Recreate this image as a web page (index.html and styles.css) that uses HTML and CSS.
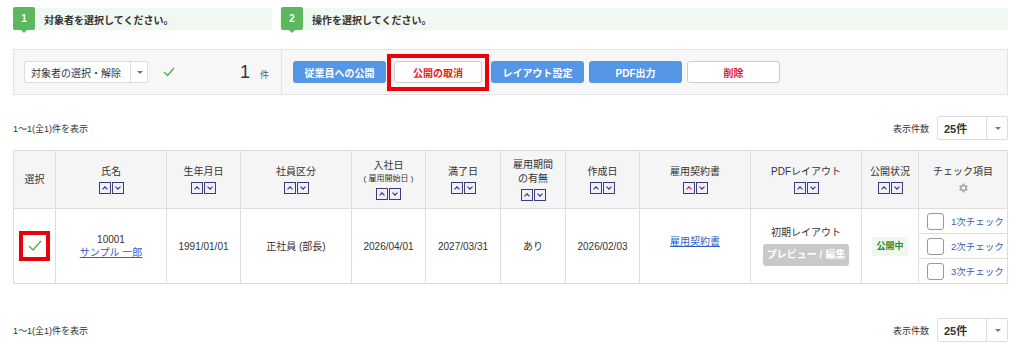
FILE: index.html
```html
<!DOCTYPE html>
<html lang="ja">
<head>
    <meta charset="UTF-8">
    <title>対象者一覧</title>
    <link rel="stylesheet" href="styles.css">
</head>
<body>
    <div class="page">
        <div class="steps">
            <div class="step step-1">
                <span class="step-badge">1</span>
                <span class="step-title">対象者を選択してください。</span>
            </div>
            <div class="step step-2">
                <span class="step-badge">2</span>
                <span class="step-title">操作を選択してください。</span>
            </div>
        </div>

        <div class="toolbar">
            <div class="toolbar-select">
                <div class="select select-target">
                    <span class="select-label">対象者の選択・解除</span>
                    <span class="select-caret"></span>
                </div>
                <svg class="tick" width="14" height="12" viewBox="0 0 14 12">
                    <polyline points="2,6 5.5,9.5 12,2" fill="none" stroke="#4caf50" stroke-width="1.3"/>
                </svg>
                <span class="count">1</span>
                <span class="count-unit">件</span>
            </div>
            <div class="toolbar-actions">
                <button class="btn btn-blue">従業員への公開</button>
                <span class="highlight">
                    <button class="btn btn-white btn-red-text">公開の取消</button>
                </span>
                <button class="btn btn-blue">レイアウト設定</button>
                <button class="btn btn-blue">PDF出力</button>
                <button class="btn btn-white btn-red-text">削除</button>
            </div>
        </div>

        <div class="list-info">
            <span class="result">1～1(全1)件を表示</span>
            <div class="per-page">
                <span class="per-page-label">表示件数</span>
                <div class="select select-per-page">
                    <span class="select-label">25件</span>
                    <span class="select-caret"></span>
                </div>
            </div>
        </div>

        <table class="list">
            <thead>
                <tr>
                    <th class="col-select">選択</th>
                    <th class="col-name">氏名<span class="sort"><i class="up"></i><i class="down"></i></span></th>
                    <th class="col-birth">生年月日<span class="sort"><i class="up"></i><i class="down"></i></span></th>
                    <th class="col-type">社員区分<span class="sort"><i class="up"></i><i class="down"></i></span></th>
                    <th class="col-date">入社日<small>( 雇用開始日 )</small><span class="sort"><i class="up"></i><i class="down"></i></span></th>
                    <th class="col-date2">満了日<span class="sort"><i class="up"></i><i class="down"></i></span></th>
                    <th class="col-term">雇用期間<br>の有無<span class="sort"><i class="up"></i><i class="down"></i></span></th>
                    <th class="col-created">作成日<span class="sort"><i class="up"></i><i class="down"></i></span></th>
                    <th class="col-doc">雇用契約書<span class="sort"><i class="up active"></i><i class="down"></i></span></th>
                    <th class="col-layout">PDFレイアウト<span class="sort"><i class="up"></i><i class="down"></i></span></th>
                    <th class="col-status">公開状況<span class="sort"><i class="up"></i><i class="down"></i></span></th>
                    <th class="col-check">チェック項目
                        <svg class="gear" width="12" height="12" viewBox="0 0 24 24">
                            <path fill="#aaa" d="M19.4 13a7.5 7.5 0 0 0 0-2l2.1-1.6-2-3.5-2.5 1a7.7 7.7 0 0 0-1.7-1L14.9 3h-4l-.4 2.9a7.7 7.7 0 0 0-1.7 1l-2.5-1-2 3.5L6.4 11a7.5 7.5 0 0 0 0 2l-2.1 1.6 2 3.5 2.5-1a7.7 7.7 0 0 0 1.7 1l.4 2.9h4l.4-2.9a7.7 7.7 0 0 0 1.7-1l2.5 1 2-3.5zM12.9 15.5a3.5 3.5 0 1 1 0-7 3.5 3.5 0 0 1 0 7z"/>
                        </svg>
                    </th>
                </tr>
            </thead>
            <tbody>
                <tr>
                    <td class="col-select">
                        <span class="row-check">
                            <svg width="16" height="14" viewBox="0 0 16 14">
                                <polyline points="2,7 6,11 14,2" fill="none" stroke="#4caf50" stroke-width="1.3"/>
                            </svg>
                        </span>
                    </td>
                    <td>10001<br><a href="#">サンプル 一郎</a></td>
                    <td>1991/01/01</td>
                    <td>正社員 (部長)</td>
                    <td>2026/04/01</td>
                    <td>2027/03/31</td>
                    <td>あり</td>
                    <td>2026/02/03</td>
                    <td><a class="doc-link" href="#">雇用契約書</a></td>
                    <td class="layout-cell">
                        初期レイアウト
                        <span class="btn-preview">プレビュー / 編集</span>
                    </td>
                    <td><span class="status">公開中</span></td>
                    <td class="check-cell">
                        <div class="check-item"><span class="box"></span><a href="#">1次チェック</a></div>
                        <div class="check-item"><span class="box"></span><a href="#">2次チェック</a></div>
                        <div class="check-item"><span class="box"></span><a href="#">3次チェック</a></div>
                    </td>
                </tr>
            </tbody>
        </table>

        <div class="list-info list-info-bottom">
            <span class="result">1～1(全1)件を表示</span>
            <div class="per-page">
                <span class="per-page-label">表示件数</span>
                <div class="select select-per-page">
                    <span class="select-label">25件</span>
                    <span class="select-caret"></span>
                </div>
            </div>
        </div>
    </div>
</body>
</html>
```

FILE: styles.css
```css
body {
    margin: 0;
    font-family: "Liberation Sans", "Noto Sans CJK JP", sans-serif;
    font-size: 10px;
    color: #333;
    background: #fff;
}

.page {
    width: 995px;
    margin: 0 0 0 13px;
    padding-top: 8px;
}

/* steps */
.steps {
    display: flex;
    gap: 8px;
}

.step {
    display: flex;
    align-items: center;
    height: 22px;
    background: #f1f7f1;
}

.step-1 {
    width: 259px;
}

.step-2 {
    flex: 1;
}

.step-badge {
    position: relative;
    width: 22px;
    height: 23px;
    margin-top: -1px;
    background: #5cb85c;
    color: #fff;
    font-weight: bold;
    font-size: 10px;
    text-align: center;
    line-height: 23px;
    border-radius: 2px;
}

.step-badge::after {
    content: "";
    position: absolute;
    left: 8px;
    bottom: -3px;
    border-left: 3px solid transparent;
    border-right: 3px solid transparent;
    border-top: 3px solid #5cb85c;
}

.step-2 .step-badge {
    margin-left: 1px;
}

.step-title {
    margin-left: 9px;
    font-weight: bold;
    font-size: 10px;
    color: #333;
}

/* toolbar */
.toolbar {
    display: flex;
    height: 44px;
    margin-top: 19px;
    background: #f7f7f7;
    border: 1px solid #e3e3e3;
}

.toolbar-select {
    display: flex;
    align-items: center;
    width: 268px;
    padding-left: 10px;
    border-right: 1px solid #e3e3e3;
    box-sizing: border-box;
}

.select {
    display: flex;
    align-items: center;
    height: 22px;
    background: #fff;
    border: 1px solid #ddd;
    border-radius: 2px;
    box-sizing: border-box;
}

.select-label {
    flex: 1;
    padding-left: 6px;
    font-size: 10px;
}

.select-caret {
    position: relative;
    width: 16px;
    height: 100%;
    border-left: 1px solid #ddd;
}

.select-caret::after {
    content: "";
    position: absolute;
    left: 6px;
    top: 9px;
    border-left: 3px solid transparent;
    border-right: 3px solid transparent;
    border-top: 3px solid #777;
}

.select-target {
    width: 124px;
}

.tick {
    margin-left: 14px;
}

.count {
    margin-left: auto;
    font-size: 18px;
    color: #333;
}

.count-unit {
    margin: 4px 12px 0 10px;
    font-size: 9px;
    color: #555;
}

.toolbar-actions {
    display: flex;
    align-items: center;
    padding-left: 11px;
}

.btn {
    width: 93px;
    height: 22px;
    margin-right: 5px;
    border: 1px solid transparent;
    border-radius: 3px;
    font-family: inherit;
    font-size: 10px;
    font-weight: bold;
    box-sizing: border-box;
}

.btn-blue {
    background: #5596e6;
    color: #fff;
}

.btn-white {
    background: #fff;
    border-color: #ccc;
}

.btn-red-text {
    color: #e31b1b;
}

.highlight {
    display: flex;
    align-items: center;
    justify-content: center;
    width: 102px;
    height: 37px;
    margin: 0 2px 0 -4px;
    border: 4px solid #e8000b;
    box-sizing: border-box;
}

.highlight .btn {
    width: 88px;
    margin: 0;
}

/* list info */
.list-info {
    display: flex;
    align-items: center;
    justify-content: space-between;
    margin-top: 21px;
    height: 24px;
}

.result {
    font-size: 9px;
    color: #333;
}

.per-page {
    display: flex;
    align-items: center;
}

.per-page-label {
    margin-right: 8px;
    font-size: 9px;
}

.select-per-page {
    width: 71px;
    height: 24px;
}

.select-per-page .select-label {
    font-weight: bold;
    font-size: 11px;
}

.select-per-page .select-caret {
    width: 20px;
}

.select-per-page .select-caret::after {
    left: 8px;
    top: 10px;
}

.list-info-bottom {
    margin-top: 34px;
}

/* table */
.list {
    width: 995px;
    margin-top: 10px;
    border-collapse: collapse;
    table-layout: fixed;
}

.list th,
.list td {
    border: 1px solid #ddd;
    text-align: center;
    vertical-align: middle;
    font-size: 10px;
    padding: 0;
}

.list th {
    height: 57px;
    background: #f5f5f5;
    font-weight: normal;
    color: #333;
    line-height: 14px;
}

.list td {
    height: 74px;
    line-height: 13px;
}

.list small {
    display: block;
    font-size: 8px;
    line-height: 12px;
}

.col-select { width: 41px; }
.col-name { width: 110px; }
.col-birth { width: 73px; }
.col-type { width: 110px; }
.col-date { width: 73px; }
.col-date2 { width: 74px; }
.col-term { width: 64px; }
.col-created { width: 73px; }
.col-doc { width: 110px; }
.col-layout { width: 110px; }
.col-status { width: 56px; }
.col-check { width: auto; }

.sort {
    display: flex;
    justify-content: center;
    gap: 1px;
    margin-top: 3px;
}

.sort i {
    position: relative;
    width: 10px;
    height: 10px;
    border: 1px solid #3b3b7e;
    background: #eef0fb;
}

.sort i::after {
    content: "";
    position: absolute;
    left: 3px;
    width: 3px;
    height: 3px;
    border-left: 1.5px solid #27275f;
    border-top: 1.5px solid #27275f;
}

.sort .up::after {
    top: 4px;
    transform: rotate(45deg);
}

.sort .down::after {
    top: 2px;
    transform: rotate(225deg);
}

.sort .up.active::after {
    border-color: #e8000b;
}

.gear {
    display: block;
    margin: 3px auto 0;
}

.row-check {
    display: inline-flex;
    align-items: center;
    justify-content: center;
    width: 31px;
    height: 30px;
    border: 4px solid #e8000b;
    background: #fff;
    box-sizing: border-box;
    vertical-align: middle;
}

.list a {
    color: #2d5fc8;
    text-decoration: underline;
}

.list .doc-link {
    display: inline-block;
    margin-bottom: 9px;
}

.layout-cell {
    line-height: 16px;
}

.btn-preview {
    display: block;
    width: 86px;
    height: 22px;
    margin: 5px auto 0;
    background: #c9c9c9;
    color: #fff;
    font-weight: bold;
    font-size: 10px;
    line-height: 22px;
    border-radius: 3px;
}

.status {
    display: inline-block;
    padding: 3px 4px;
    background: #eef8ee;
    color: #2e8b2e;
    font-weight: bold;
    font-size: 9px;
}

.list .check-cell {
    height: 74px;
}

.check-item {
    display: flex;
    align-items: center;
    height: 24px;
    padding-left: 8px;
    border-top: 1px solid #ddd;
    white-space: nowrap;
}

.check-item:first-child {
    border-top: none;
}

.check-item .box {
    flex: none;
    width: 15px;
    height: 15px;
    border: 1px solid #999;
    border-radius: 3px;
    background: #fff;
}

.list .check-item a {
    margin-left: 7px;
    font-size: 9.5px;
    color: #3a5cb8;
    text-decoration: none;
}
```
